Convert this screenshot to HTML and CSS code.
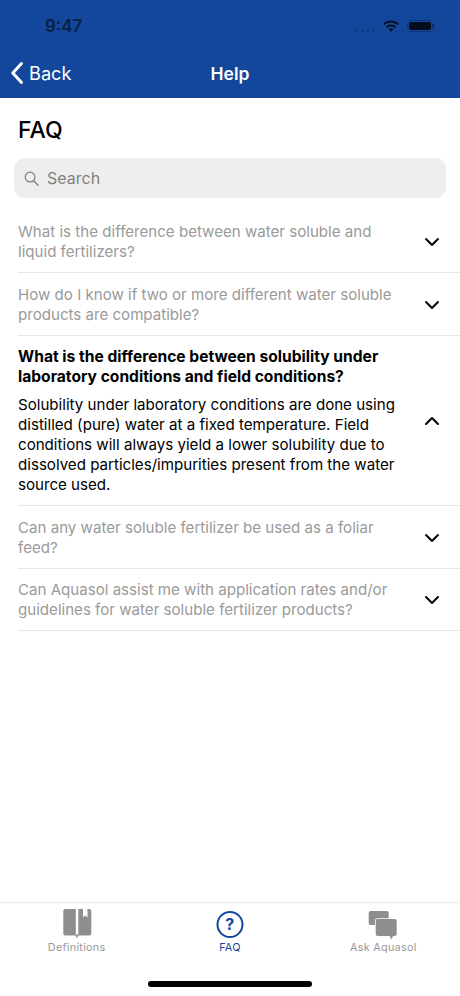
FILE: index.html
```html
<!DOCTYPE html>
<html lang="en">
<head>
<meta charset="utf-8">
<title>Help</title>
<link rel="stylesheet" href="styles.css">
</head>
<body>
<div class="screen">
  <header class="header">
    <div class="status">
      <span class="time">9:47</span>
      <div class="status-icons">
        <span class="signal"><i></i><i></i><i></i><i></i></span>
        <svg class="wifi" viewBox="0 0 18 13" width="18" height="13"><path d="M9 2.600c2.500 0 4.800 1 6.500 2.600l1.300-1.400C14.700 1.800 12 .6 9 .6S3.300 1.800 1.200 3.800l1.300 1.400C4.200 3.600 6.500 2.600 9 2.600z"/><path d="M9 6.400c1.500 0 2.800.6 3.800 1.500l1.300-1.400C12.800 5.200 11 4.400 9 4.400S5.200 5.200 3.900 6.500l1.300 1.400c1-.9 2.300-1.500 3.800-1.500z"/><path d="M9 8.200c-1 0-1.800.4-2.400 1L9 11.800l2.400-2.600c-.6-.6-1.400-1-2.400-1z"/></svg>
        <span class="battery"><span class="battery-fill"></span></span>
        <span class="battery-tip"></span>
      </div>
    </div>
    <div class="nav">
      <div class="back">
        <svg viewBox="0 0 14 24" width="14" height="24"><path d="M11.500 2.500 2.800 12l8.700 9.500" fill="none" stroke="#fff" stroke-width="3" stroke-linecap="round" stroke-linejoin="round"/></svg>
        <span>Back</span>
      </div>
      <div class="nav-title">Help</div>
    </div>
  </header>

  <main class="content">
    <h1 class="title">FAQ</h1>
    <div class="search">
      <svg viewBox="0 0 16 16" width="15" height="15"><circle cx="6.500" cy="6.500" r="5.200" fill="none" stroke="#808080" stroke-width="1.300"/><path d="m10.400 10.400 4.600 4.700" stroke="#808080" stroke-width="1.500" stroke-linecap="round"/></svg>
      <span>Search</span>
    </div>
    <div class="faq">
      <div class="row">
        <div class="q">What is the difference between water soluble and<br>liquid fertilizers?</div>
        <svg class="chev" viewBox="0 0 16 10" width="16" height="10"><path d="M2 2l6 6 6-6"/></svg>
      </div>
      <div class="row">
        <div class="q">How do I know if two or more different water soluble<br>products are compatible?</div>
        <svg class="chev" viewBox="0 0 16 10" width="16" height="10"><path d="M2 2l6 6 6-6"/></svg>
      </div>
      <div class="row open">
        <div class="body">
          <div class="q-open">What is the difference between solubility under<br>laboratory conditions and field conditions?</div>
          <div class="a">Solubility under laboratory conditions are done using<br>distilled (pure) water at a fixed temperature. Field<br>conditions will always yield a lower solubility due to<br>dissolved particles/impurities present from the water<br>source used.</div>
        </div>
        <svg class="chev" viewBox="0 0 16 10" width="16" height="10"><path d="M2 8l6-6 6 6"/></svg>
      </div>
      <div class="row">
        <div class="q">Can any water soluble fertilizer be used as a foliar<br>feed?</div>
        <svg class="chev" viewBox="0 0 16 10" width="16" height="10"><path d="M2 2l6 6 6-6"/></svg>
      </div>
      <div class="row">
        <div class="q">Can Aquasol assist me with application rates and/or<br>guidelines for water soluble fertilizer products?</div>
        <svg class="chev" viewBox="0 0 16 10" width="16" height="10"><path d="M2 2l6 6 6-6"/></svg>
      </div>
    </div>
  </main>

  <footer class="tabbar">
    <div class="tabs">
      <div class="tab">
        <svg viewBox="0 0 30 32" width="30" height="32"><path class="ico" d="M3.300 1H13.800V26.500H15V30.500L13.800 27.500H3.300C2.200 27.500 1.300 26.600 1.300 25.500V3C1.300 1.900 2.200 1 3.300 1z"/><path class="ico" d="M16.300 1H21V9.500L23.200 7.500 25.500 9.500V1H27.300C28.400 1 29.300 1.900 29.300 3V25.500C29.300 26.600 28.400 27.500 27.300 27.500H16.300L15 30.500V26.500H16.300z"/></svg>
        <span>Definitions</span>
      </div>
      <div class="tab active">
        <svg viewBox="0 0 30 32" width="30" height="32"><circle cx="15" cy="16.500" r="12.500" fill="none" stroke="#13479c" stroke-width="2"/><text x="15" y="22" text-anchor="middle" class="qmark">?</text></svg>
        <span>FAQ</span>
      </div>
      <div class="tab">
        <svg viewBox="0 0 30 32" width="30" height="32"><path class="ico" d="M2.700 3h16c1.100 0 2 .9 2 2v10c0 1.100-.9 2-2 2h-16c-1.100 0-2-.9-2-2V5c0-1.100.9-2 2-2z"/><path class="ico cut" d="M9.700 11h17c1.100 0 2 .9 2 2v13c0 1.100-.9 2-2 2h-1.500l-2 3.500-1.500-3.500h-12c-1.100 0-2-.9-2-2V13c0-1.100.9-2 2-2z"/></svg>
        <span>Ask Aquasol</span>
      </div>
    </div>
    <div class="home"></div>
  </footer>
</div>
</body>
</html>
```
FILE: styles.css
```css
* { box-sizing: border-box; }
html, body { margin: 0; padding: 0; }
body { font-family: Inter, "Liberation Sans", sans-serif; background: #fff; color: #000; }
.screen { width: 460px; height: 996px; display: flex; flex-direction: column; overflow: hidden; }

.header { height: 98px; background: #13479c; display: flex; flex-direction: column; flex: none; }
.status { height: 50px; display: flex; align-items: center; justify-content: space-between; padding: 2px 25px 0 45px; }
.time { font-size: 17px; font-weight: 600; color: #0a1f44; }
.status-icons { display: flex; align-items: center; }
.signal { display: flex; gap: 2.670px; margin-top: 8px; margin-right: 7px; }
.signal i { width: 3px; height: 3px; border-radius: 50%; background: #10398a; display: block; }
.wifi { fill: #060f24; margin-right: 7px; }
.battery { width: 26px; height: 12px; border: 1px solid #0e3273; border-radius: 4px; padding: 1px; display: block; }
.battery-fill { display: block; height: 100%; background: #050c1e; border-radius: 2.500px; }
.battery-tip { width: 2px; height: 4px; background: #0e3273; border-radius: 0 2px 2px 0; }

.nav { position: relative; height: 48px; padding-bottom: 2px; display: flex; align-items: center; justify-content: center; }
.back { position: absolute; left: 10px; top: 11px; display: flex; align-items: center; gap: 5px; color: #fff; font-size: 18.200px; }
.nav-title { color: #fff; font-size: 17.500px; font-weight: 600; }

.content { flex: 1; }
.title { margin: 0; padding: 18px 18px 0; font-size: 23px; line-height: 28px; font-weight: 500; }
.search { margin: 14px 14px 0; height: 40px; border-radius: 11px; background: #eeeeee; display: flex; align-items: center; gap: 8px; padding-left: 10px; color: #808080; font-size: 16px; }

.faq { margin-top: 12.500px; padding-left: 18px; }
.row { display: flex; align-items: center; justify-content: space-between; border-bottom: 1px solid #e6e6e6; padding: 11.500px 20px 10px 0; }
.q { color: #9a9a9a; font-size: 15.100px; line-height: 20px; }
.body { flex: 1; }
.q-open { font-size: 15.600px; font-weight: 700; line-height: 20px; }
.a { font-size: 15.120px; line-height: 20px; margin-top: 8px; }
.chev { flex: none; fill: none; stroke: #000; stroke-width: 2; stroke-linecap: round; stroke-linejoin: round; }

.tabbar { flex: none; height: 94px; border-top: 1px solid #ececec; display: flex; flex-direction: column; }
.tabs { display: grid; grid-template-columns: repeat(3, 1fr); padding-top: 5px; }
.tab { display: flex; flex-direction: column; align-items: center; color: #999999; font-size: 10.800px; font-weight: 400; letter-spacing: .3px; gap: 1px; }
.tab span { line-height: 14px; }
.tab.active { color: #13479c; }
.ico { fill: #8e8e8e; }
.ico.cut { stroke: #fff; stroke-width: 1.500; paint-order: stroke; }
.qmark { font-size: 16px; font-weight: 700; fill: #13479c; font-family: Inter, sans-serif; }
.home { width: 164px; height: 6px; background: #000; border-radius: 3px; margin: 26px auto 0; }
```
